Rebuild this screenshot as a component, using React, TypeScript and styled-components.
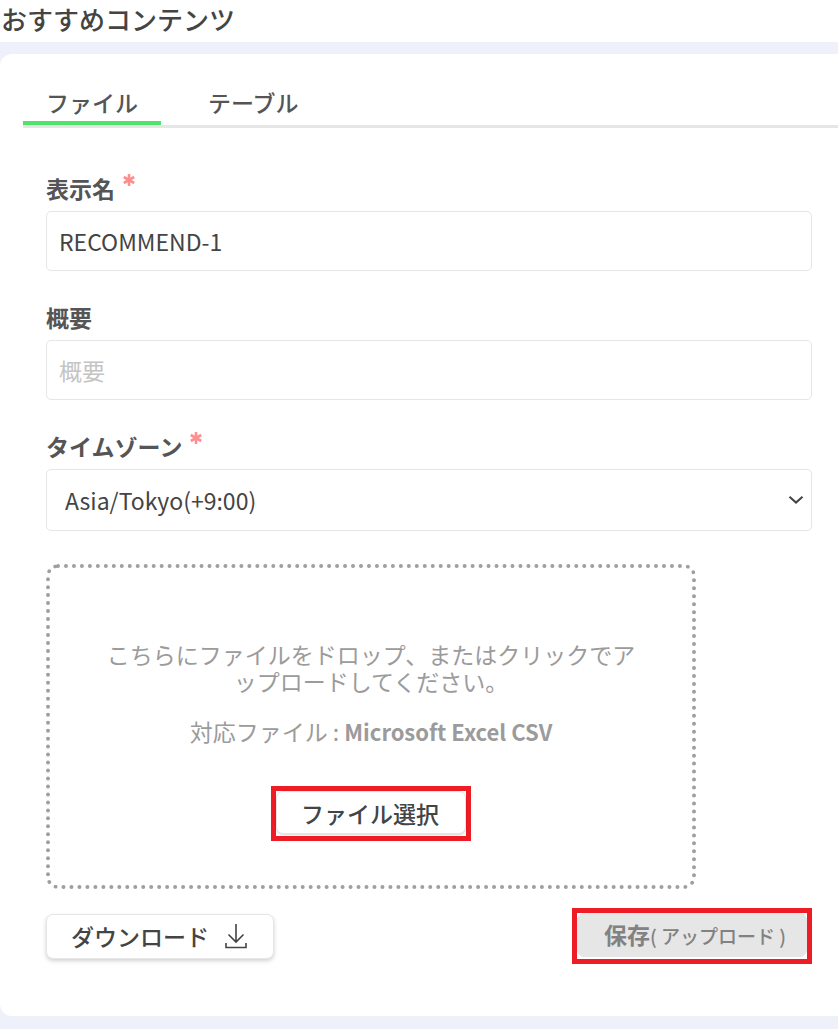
import React from "react";
import styled, { createGlobalStyle } from "styled-components";

const GlobalStyle = createGlobalStyle`
  *, *::before, *::after { box-sizing: border-box; }
  body {
    margin: 0;
    background: #eef1fa;
    color: #444;
    font-family: "Noto Sans CJK JP", "Noto Sans", sans-serif;
    font-size: 23px;
  }
  button, input, select { font: inherit; color: inherit; margin: 0; }
`;

const Page = styled.div`
  display: flex;
  flex-direction: column;
  gap: 12px;
  padding-bottom: 13px;
`;

const Header = styled.header`
  padding: 0 1px 4px;
  background: #fff;
`;

const Title = styled.h1`
  margin: 0;
  font-size: 26px;
  font-weight: 500;
  line-height: 38px;
`;

const Card = styled.main`
  background: #fff;
  border-radius: 12px 0 0 12px;
  padding: 30px 0 52px 23px;
`;

const TabList = styled.div`
  display: flex;
  gap: 24px;
  border-bottom: 3px solid #e6e6e6;
`;

const Tab = styled.button<{ $active?: boolean }>`
  padding: 0 23px;
  border: 0;
  border-bottom: 4px solid ${(p) => (p.$active ? "#4fe36a" : "transparent")};
  background: none;
  color: #555;
  font-weight: 500;
  line-height: 37px;
  cursor: pointer;
`;

const Form = styled.form`
  display: flex;
  flex-direction: column;
  padding: 44px 26px 0 23px;
`;

const Field = styled.div`
  display: flex;
  flex-direction: column;
  gap: 7px;
  margin-bottom: 30px;
`;

const Label = styled.label`
  display: flex;
  gap: 8px;
  color: #555;
  font-weight: 700;
  line-height: 32px;
`;

const RequiredMark = styled.svg`
  width: 12px;
  height: 12px;
  margin-top: 2px;
  stroke: #ff8f8f;
  stroke-width: 2.6;
`;

const TextInput = styled.input`
  width: 100%;
  height: 60px;
  padding: 0 12px;
  border: 1px solid #e6e6e6;
  border-radius: 5px;
  background: #fff;
  &::placeholder { color: #c4c4c4; opacity: 1; }
`;

const SelectBox = styled.div`
  position: relative;
`;

const Select = styled.select`
  display: block;
  width: 100%;
  height: 62px;
  padding: 0 40px 0 18px;
  border: 1px solid #e6e6e6;
  border-radius: 5px;
  background: #fff;
  appearance: none;
`;

const Chevron = styled.svg`
  position: absolute;
  right: 8px;
  top: 26px;
  width: 16px;
  height: 10px;
  fill: none;
  stroke: #444;
  stroke-width: 2;
  pointer-events: none;
`;

const DropZone = styled.section`
  display: flex;
  flex-direction: column;
  align-items: center;
  width: 100%;
  max-width: 650px;
  margin-top: 3px;
  padding: 73px 50px 44px;
  border: 4px dotted #9f9f9f;
  border-radius: 12px;
  color: #9b9b9b;
  text-align: center;
  line-height: 27px;
`;

const Text = styled.p`
  margin: 0 0 23px;
`;

const FileTypes = styled.strong`
  font-size: 22px;
  font-weight: 700;
`;

const Highlight = styled.div`
  border: 5px solid #ee1c24;
  padding: 0 0 2px;
`;

const PickHighlight = styled(Highlight)`
  margin-top: 18px;
`;

const Button = styled.button`
  display: flex;
  align-items: center;
  justify-content: center;
  gap: 16px;
  height: 45px;
  padding: 0 26px 0 24px;
  border: 1px solid #e6e6e6;
  border-radius: 7px;
  background: #fff;
  box-shadow: 0 2px 4px rgba(0, 0, 0, 0.18);
  color: #444;
  font-weight: 500;
  line-height: 34px;
  white-space: nowrap;
  cursor: pointer;
`;

const PickButton = styled(Button)`
  width: 190px;
  height: 43px;
  box-shadow: 0 1px 2px rgba(0, 0, 0, 0.15);
`;

const SaveButton = styled(Button)`
  align-items: baseline;
  width: 230px;
  height: 44px;
  padding: 3px 18px 0 24px;
  gap: 0;
  background: #e6e6e6;
  box-shadow: none;
  color: #828282;
  font-weight: 700;
  cursor: default;
`;

const SaveNote = styled.span`
  font-size: 19px;
  font-weight: 500;
`;

const Actions = styled.div`
  display: flex;
  justify-content: space-between;
  align-items: center;
  margin-top: 19px;
`;

const DownloadIcon = styled.svg`
  width: 22px;
  height: 26px;
  fill: none;
  stroke: #444;
  stroke-width: 1.6;
`;

const Required = () => (
  <RequiredMark viewBox="0 0 12 12" role="img" aria-label="必須">
    <path d="M6 0v12M0.8 3l10.4 6M11.2 3L0.8 9" />
  </RequiredMark>
);

export default function App() {
  return (
    <>
      <GlobalStyle />
      <Page lang="ja">
        <Header>
          <Title>おすすめコンテンツ</Title>
        </Header>
        <Card>
          <TabList role="tablist">
            <Tab type="button" role="tab" aria-selected="true" $active>
              ファイル
            </Tab>
            <Tab type="button" role="tab" aria-selected="false">
              テーブル
            </Tab>
          </TabList>
          <Form onSubmit={(e) => e.preventDefault()}>
            <Field>
              <Label htmlFor="name">
                表示名
                <Required />
              </Label>
              <TextInput id="name" type="text" defaultValue="RECOMMEND-1" required />
            </Field>
            <Field>
              <Label htmlFor="summary">概要</Label>
              <TextInput id="summary" type="text" placeholder="概要" />
            </Field>
            <Field>
              <Label htmlFor="timezone">
                タイムゾーン
                <Required />
              </Label>
              <SelectBox>
                <Select id="timezone" defaultValue="tokyo">
                  <option value="tokyo">Asia/Tokyo(+9:00)</option>
                </Select>
                <Chevron viewBox="0 0 16 10" aria-hidden="true">
                  <path d="M1.5 1.8L8 7.6l6.5-5.8" />
                </Chevron>
              </SelectBox>
            </Field>
            <DropZone>
              <Text>
                こちらにファイルをドロップ、またはクリックでアップロードしてください。
              </Text>
              <Text>
                対応ファイル : <FileTypes>Microsoft Excel CSV</FileTypes>
              </Text>
              <PickHighlight>
                <PickButton type="button">ファイル選択</PickButton>
              </PickHighlight>
            </DropZone>
            <Actions>
              <Button type="button">
                ダウンロード
                <DownloadIcon viewBox="0 0 22 26" aria-hidden="true">
                  <path d="M11 1v18M3.5 11.5L11 19l7.500-7.500M1 20v4.500h20V20" />
                </DownloadIcon>
              </Button>
              <Highlight>
                <SaveButton type="submit" disabled>
                  保存<SaveNote>( アップロード )</SaveNote>
                </SaveButton>
              </Highlight>
            </Actions>
          </Form>
        </Card>
      </Page>
    </>
  );
}
